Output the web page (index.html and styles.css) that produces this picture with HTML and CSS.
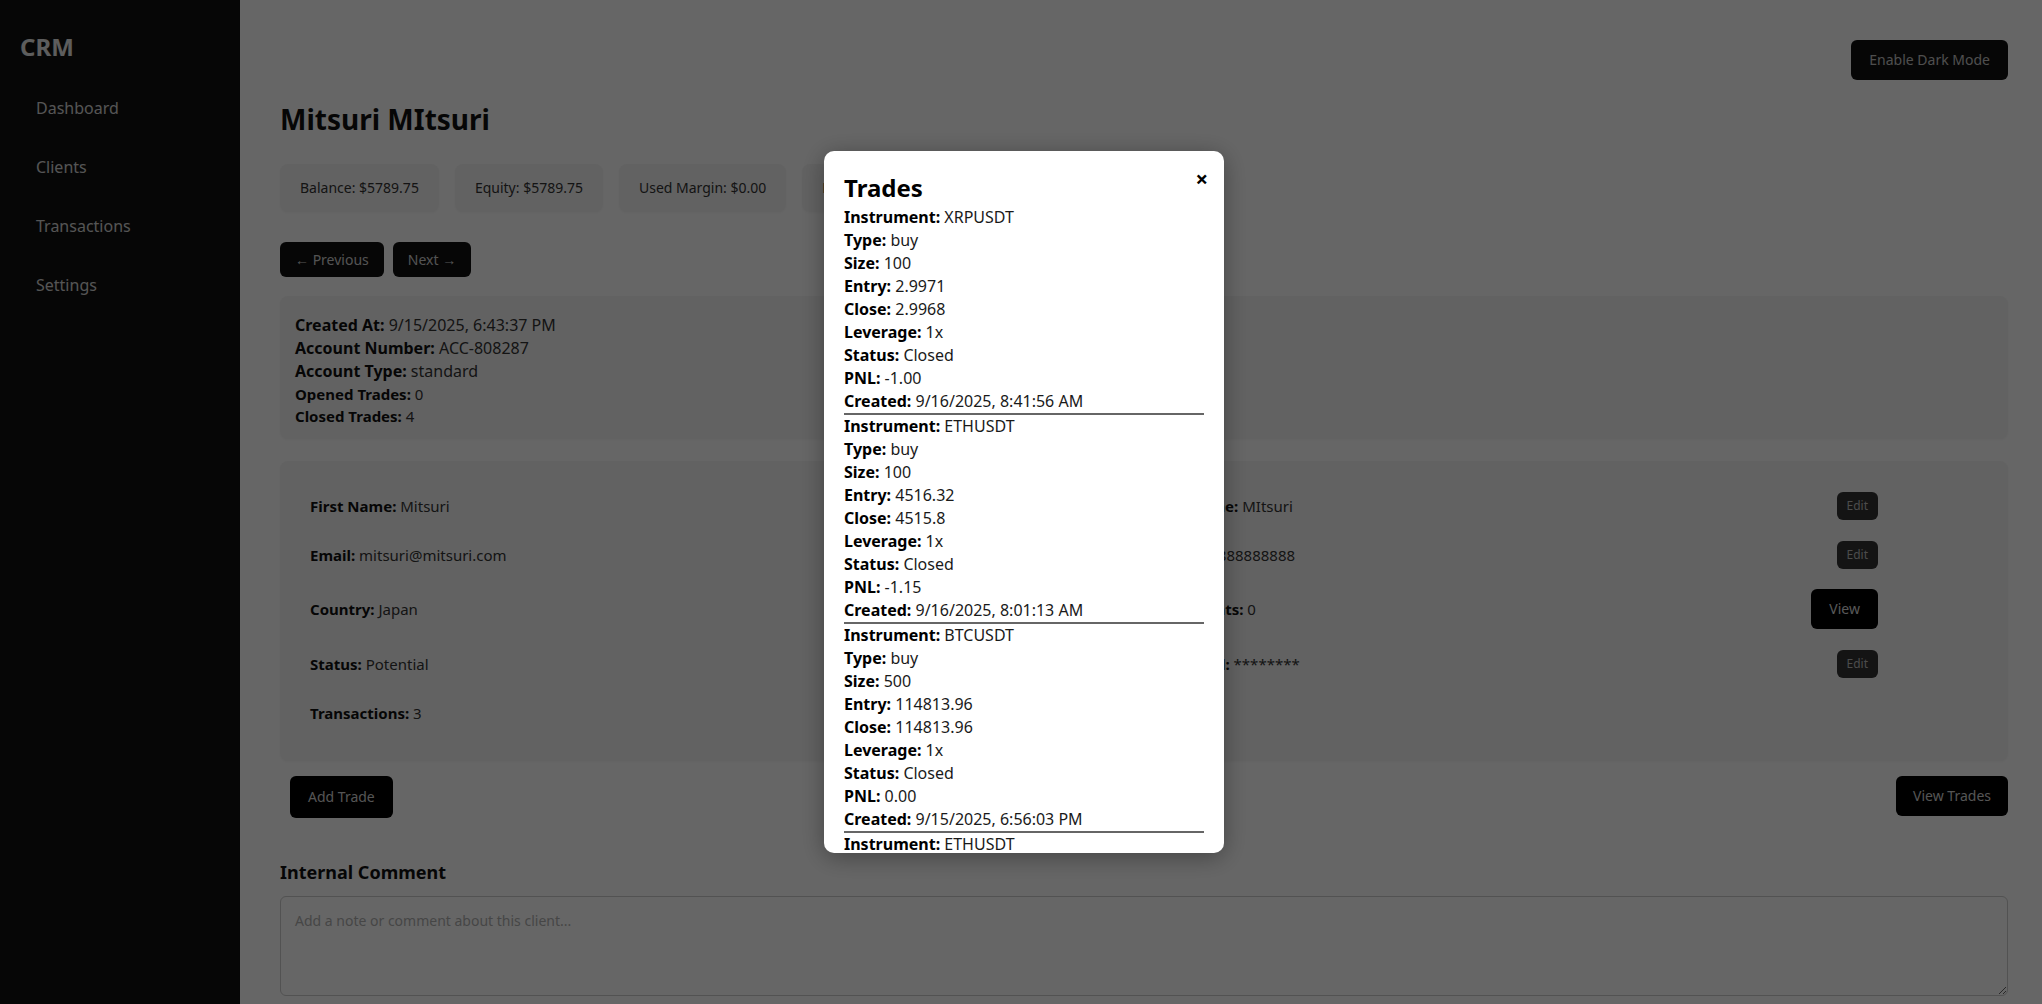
FILE: index.html
```html
<!DOCTYPE html>
<html lang="en">
<head>
<meta charset="utf-8">
<title>CRM - Client</title>
<link rel="stylesheet" href="styles.css">
</head>
<body>
<div class="app">
  <aside class="sidebar">
    <h2 class="brand">CRM</h2>
    <nav class="nav">
      <a class="nav-link" href="#">Dashboard</a>
      <a class="nav-link" href="#">Clients</a>
      <a class="nav-link" href="#">Transactions</a>
      <a class="nav-link" href="#">Settings</a>
    </nav>
  </aside>
  <main class="main">
    <div class="topbar">
      <button class="btn btn-dark">Enable Dark Mode</button>
    </div>
    <h1 class="client-name">Mitsuri MItsuri</h1>
    <div class="stats">
      <div class="stat">Balance: $5789.75</div>
      <div class="stat">Equity: $5789.75</div>
      <div class="stat">Used Margin: $0.00</div>
      <div class="stat">Free Margin: $5789.75</div>
    </div>
    <div class="pager">
      <button class="btn btn-pager">← Previous</button>
      <button class="btn btn-pager">Next →</button>
    </div>
    <section class="card info-card">
      <div class="info-line"><b>Created At:</b> 9/15/2025, 6:43:37 PM</div>
      <div class="info-line"><b>Account Number:</b> ACC-808287</div>
      <div class="info-line"><b>Account Type:</b> standard</div>
      <div class="info-line small"><b>Opened Trades:</b> 0</div>
      <div class="info-line small"><b>Closed Trades:</b> 4</div>
    </section>
    <section class="card fields-card">
      <div class="field"><span><b>First Name:</b> Mitsuri</span><button class="btn btn-edit">Edit</button></div>
      <div class="field"><span><b>Last Name:</b> MItsuri</span><button class="btn btn-edit">Edit</button></div>
      <div class="field"><span><b>Email:</b> mitsuri@mitsuri.com</span><button class="btn btn-edit">Edit</button></div>
      <div class="field"><span><b>Phone:</b> 8888888888</span><button class="btn btn-edit">Edit</button></div>
      <div class="field"><span><b>Country:</b> Japan</span><button class="btn btn-edit">Edit</button></div>
      <div class="field"><span><b>Documents:</b> 0</span><button class="btn btn-view">View</button></div>
      <div class="field"><span><b>Status:</b> Potential</span><button class="btn btn-edit">Edit</button></div>
      <div class="field"><span><b>Password:</b> ********</span><button class="btn btn-edit">Edit</button></div>
      <div class="field"><span><b>Transactions:</b> 3</span><button class="btn btn-edit">View</button></div>
      <div class="field"></div>
    </section>
    <div class="actions">
      <button class="btn btn-black btn-add">Add Trade</button>
      <button class="btn btn-black">View Trades</button>
    </div>
    <h3 class="comment-title">Internal Comment</h3>
    <textarea class="comment" placeholder="Add a note or comment about this client..."></textarea>
  </main>
</div>

<div class="overlay">
  <div class="modal">
    <button class="close">×</button>
    <h2 class="modal-title">Trades</h2>
    <div class="trade">
      <div class="trade-line"><b>Instrument:</b> XRPUSDT</div>
      <div class="trade-line"><b>Type:</b> buy</div>
      <div class="trade-line"><b>Size:</b> 100</div>
      <div class="trade-line"><b>Entry:</b> 2.9971</div>
      <div class="trade-line"><b>Close:</b> 2.9968</div>
      <div class="trade-line"><b>Leverage:</b> 1x</div>
      <div class="trade-line"><b>Status:</b> Closed</div>
      <div class="trade-line"><b>PNL:</b> -1.00</div>
      <div class="trade-line"><b>Created:</b> 9/16/2025, 8:41:56 AM</div>
    </div>
    <div class="trade">
      <div class="trade-line"><b>Instrument:</b> ETHUSDT</div>
      <div class="trade-line"><b>Type:</b> buy</div>
      <div class="trade-line"><b>Size:</b> 100</div>
      <div class="trade-line"><b>Entry:</b> 4516.32</div>
      <div class="trade-line"><b>Close:</b> 4515.8</div>
      <div class="trade-line"><b>Leverage:</b> 1x</div>
      <div class="trade-line"><b>Status:</b> Closed</div>
      <div class="trade-line"><b>PNL:</b> -1.15</div>
      <div class="trade-line"><b>Created:</b> 9/16/2025, 8:01:13 AM</div>
    </div>
    <div class="trade">
      <div class="trade-line"><b>Instrument:</b> BTCUSDT</div>
      <div class="trade-line"><b>Type:</b> buy</div>
      <div class="trade-line"><b>Size:</b> 500</div>
      <div class="trade-line"><b>Entry:</b> 114813.96</div>
      <div class="trade-line"><b>Close:</b> 114813.96</div>
      <div class="trade-line"><b>Leverage:</b> 1x</div>
      <div class="trade-line"><b>Status:</b> Closed</div>
      <div class="trade-line"><b>PNL:</b> 0.00</div>
      <div class="trade-line"><b>Created:</b> 9/15/2025, 6:56:03 PM</div>
    </div>
    <div class="trade">
      <div class="trade-line"><b>Instrument:</b> ETHUSDT</div>
      <div class="trade-line"><b>Type:</b> buy</div>
      <div class="trade-line"><b>Size:</b> 100</div>
      <div class="trade-line"><b>Entry:</b> 4498.10</div>
      <div class="trade-line"><b>Close:</b> 4498.10</div>
      <div class="trade-line"><b>Leverage:</b> 1x</div>
      <div class="trade-line"><b>Status:</b> Closed</div>
      <div class="trade-line"><b>PNL:</b> 0.00</div>
      <div class="trade-line"><b>Created:</b> 9/15/2025, 6:50:12 PM</div>
    </div>
  </div>
</div>
</body>
</html>
```

FILE: styles.css
```css
* {
  box-sizing: border-box;
}

html, body {
  margin: 0;
  height: 100%;
}

body {
  font-family: "Noto Sans", "Open Sans", sans-serif;
  background: #ffffff;
  color: #222;
  overflow: hidden;
}

.app {
  display: flex;
  min-height: 100vh;
}

/* Sidebar */
.sidebar {
  width: 240px;
  flex-shrink: 0;
  background: #111;
  color: #ddd;
  padding: 20px;
  min-height: 100vh;
}

.brand {
  font-size: 24px;
  font-weight: 700;
  line-height: normal;
  margin: 10px 0 22px 0;
  color: #e8e8e8;
}

.nav {
  display: flex;
  flex-direction: column;
  gap: 13px;
}

.nav-link {
  display: block;
  padding: 12px 16px;
  font-size: 16px;
  line-height: 22px;
  color: #d4d4d4;
  text-decoration: none;
  border-radius: 6px;
}

/* Main */
.main {
  flex: 1;
  min-width: 0;
  padding: 40px 34px 40px 40px;
}

.topbar {
  display: flex;
  justify-content: flex-end;
}

.btn {
  font-family: inherit;
  border: none;
  border-radius: 6px;
  cursor: pointer;
}

.btn-dark {
  background: #111;
  color: #c4c4c4;
  font-size: 14px;
  line-height: 20px;
  padding: 10px 18px;
}

.client-name {
  font-size: 28px;
  font-weight: 700;
  line-height: normal;
  margin: 20px 0 26px 0;
  color: #111;
}

.stats {
  display: flex;
  gap: 16px;
  margin-bottom: 30px;
}

.stat {
  background: #f5f5f5;
  border-radius: 8px;
  padding: 14px 20px;
  font-size: 14px;
  line-height: 20px;
  color: #333;
  box-shadow: 0 1px 3px rgba(0, 0, 0, 0.04);
}

.pager {
  display: flex;
  gap: 9px;
  margin-bottom: 19px;
}

.btn-pager {
  background: #111;
  color: #d0d0d0;
  font-size: 14px;
  line-height: 19px;
  padding: 8px 15px;
}

.card {
  background: #f5f5f5;
  border-radius: 8px;
  box-shadow: 0 1px 3px rgba(0, 0, 0, 0.04);
}

.info-card {
  padding: 18px 15px 12px 15px;
  margin-bottom: 22px;
}

.info-line {
  font-size: 16px;
  line-height: 23px;
  color: #333;
}

.info-line b {
  color: #111;
}

.info-line.small {
  font-size: 15px;
  line-height: 22px;
}

.fields-card {
  display: grid;
  grid-template-columns: calc(50% - 5px) 1fr;
  padding: 20px 15px 24px 15px;
  margin-bottom: 15px;
}

.field {
  display: flex;
  align-items: center;
  justify-content: space-between;
  min-height: 49px;
  padding: 10px 115px 10px 15px;
  font-size: 15px;
  line-height: 22px;
  color: #333;
}

.field b {
  color: #111;
}

.btn-edit {
  background: #333;
  color: #bdbdbd;
  font-size: 12px;
  line-height: 16px;
  padding: 6px 10px;
}

.btn-view {
  background: #000;
  color: #dcdcdc;
  font-size: 14px;
  line-height: 20px;
  padding: 10px 18px;
}

.actions {
  display: flex;
  justify-content: space-between;
  align-items: flex-start;
}

.btn-black {
  background: #000;
  color: #d4d4d4;
  font-size: 14px;
  line-height: 20px;
  padding: 10px 17px;
}

.btn-add {
  margin-left: 10px;
  padding: 11px 18px;
}

.comment-title {
  font-size: 18px;
  font-weight: 700;
  line-height: normal;
  margin: 42px 0 12px 0;
  color: #111;
}

.comment {
  display: block;
  width: 100%;
  height: 100px;
  padding: 14px;
  border: 1px solid #ccc;
  border-radius: 6px;
  font-family: inherit;
  font-size: 14px;
  line-height: 19px;
  background: #fff;
  color: #222;
}

.comment::placeholder {
  color: #b0b0b0;
}

/* Modal */
.overlay {
  position: fixed;
  inset: 0;
  background: rgba(0, 0, 0, 0.6);
  display: flex;
  align-items: center;
  justify-content: center;
}

.modal {
  position: relative;
  width: 400px;
  max-height: 70vh;
  overflow-y: auto;
  scrollbar-width: none;
  background: #fff;
  border-radius: 10px;
  padding: 20px;
  margin-left: 6px;
  box-shadow: 0 4px 24px rgba(0, 0, 0, 0.35);
  color: #222;
}

.modal::-webkit-scrollbar {
  display: none;
}

.close {
  position: absolute;
  top: 16px;
  right: 16px;
  background: none;
  border: none;
  padding: 0;
  font-family: inherit;
  font-size: 22px;
  font-weight: 700;
  line-height: 22px;
  color: #000;
  cursor: pointer;
}

.modal-title {
  font-size: 24px;
  font-weight: 700;
  line-height: normal;
  margin: 0 0 2px 0;
  color: #000;
}

.trade {
  border-bottom: 2px solid #666;
}

.trade-line {
  font-size: 16px;
  line-height: 23px;
  color: #1a1a1a;
}

.trade-line b {
  color: #000;
}
```
